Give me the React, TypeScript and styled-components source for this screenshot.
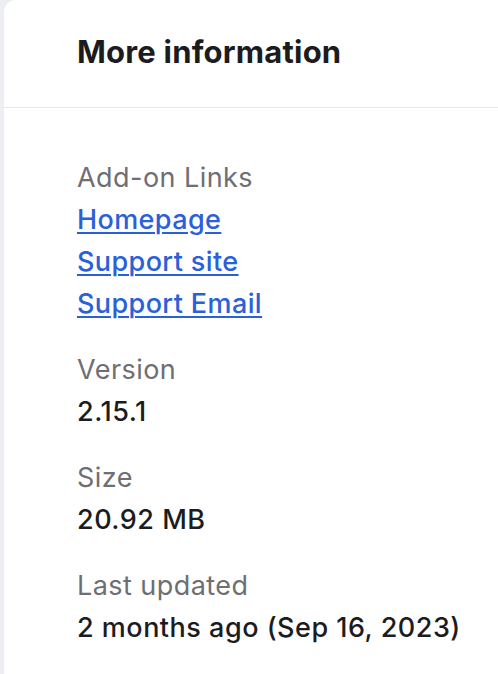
import React from "react";
import styled, { createGlobalStyle } from "styled-components";

const Global = createGlobalStyle`
  html, body { margin: 0; padding: 0; }
  body {
    background: #eceef2;
    font-family: Inter, "Noto Sans", "Liberation Sans", sans-serif;
    -webkit-font-smoothing: antialiased;
  }
`;

const Page = styled.div`
  min-height: 674px;
  padding-left: 4px;
  display: flex;
  flex-direction: column;
`;

const Card = styled.section`
  flex: 1;
  background: #ffffff;
  border-top-left-radius: 12px;
  min-height: 674px;
`;

const Header = styled.header`
  padding: 34px 0 37px 73px;
  border-bottom: 1px solid #e6e6ea;
`;

const Title = styled.h2`
  margin: 0;
  font-size: 31px;
  line-height: 36px;
  font-weight: 700;
  letter-spacing: 0.2px;
  color: #1c1c1e;
`;

const Body = styled.div`
  padding: 49px 0 0 73px;
  display: flex;
  flex-direction: column;
  gap: 24px;
`;

const Group = styled.dl`
  margin: 0;
  display: flex;
  flex-direction: column;
`;

const Label = styled.dt`
  font-size: 27px;
  line-height: 42px;
  letter-spacing: 0.45px;
  color: #6e6e73;
`;

const Value = styled.dd`
  margin: 0;
  font-size: 27px;
  line-height: 42px;
  letter-spacing: 0.5px;
  font-weight: 500;
  color: #1c1c1e;
`;

const Link = styled.a`
  font-size: 27px;
  line-height: 42px;
  letter-spacing: 0.4px;
  font-weight: 500;
  color: #2a60d8;
  text-decoration: underline;
  text-underline-offset: 3px;
  text-decoration-thickness: 2px;
`;

const LinkItem = styled.dd`
  margin: 0;
`;

const items = [
  { label: "Version", value: "2.15.1" },
  { label: "Size", value: "20.92 MB" },
  { label: "Last updated", value: "2 months ago (Sep 16, 2023)" },
];

const links = ["Homepage", "Support site", "Support Email"];

export default function App() {
  return (
    <>
      <Global />
      <Page>
        <Card>
          <Header>
            <Title>More information</Title>
          </Header>
          <Body>
            <Group>
              <Label>Add-on Links</Label>
              {links.map((l) => (
                <LinkItem key={l}>
                  <Link href="#">{l}</Link>
                </LinkItem>
              ))}
            </Group>
            {items.map((it) => (
              <Group key={it.label}>
                <Label>{it.label}</Label>
                <Value>{it.value}</Value>
              </Group>
            ))}
          </Body>
        </Card>
      </Page>
    </>
  );
}
